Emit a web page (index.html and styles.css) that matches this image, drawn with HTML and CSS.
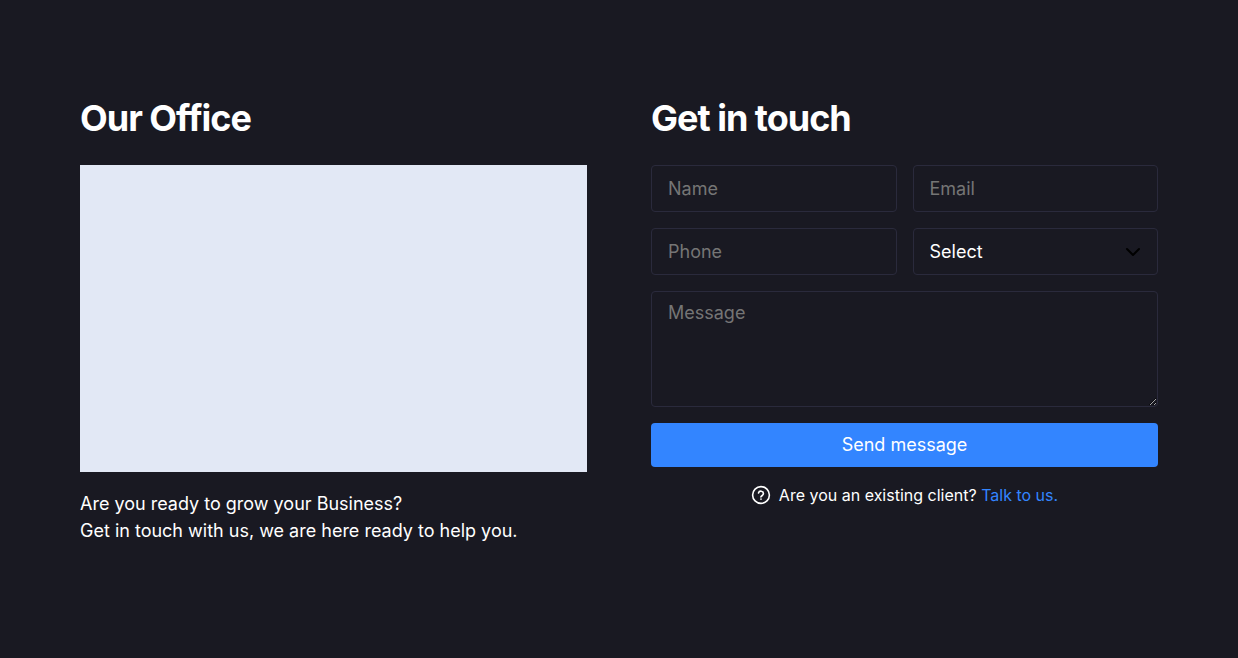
FILE: index.html
```html
<!DOCTYPE html>
<html lang="en">
<head>
<meta charset="utf-8">
<meta name="viewport" content="width=device-width, initial-scale=1">
<title>Get in touch</title>
<link rel="stylesheet" href="styles.css">
</head>
<body>
<main class="contact">
  <section class="office">
    <h2 class="title">Our Office</h2>
    <div class="map" role="img" aria-label="Office map"></div>
    <p class="intro">Are you ready to grow your Business?<br>Get in touch with us, we are here ready to help you.</p>
  </section>
  <section class="touch">
    <h2 class="title">Get in touch</h2>
    <form class="form">
      <input class="field" type="text" placeholder="Name" aria-label="Name">
      <input class="field" type="email" placeholder="Email" aria-label="Email">
      <input class="field" type="tel" placeholder="Phone" aria-label="Phone">
      <div class="select-wrap">
        <select class="field select" aria-label="Select"><option>Select</option></select>
        <svg class="chevron" viewBox="0 0 16 16" aria-hidden="true"><path d="M2 5l6 6 6-6"/></svg>
      </div>
      <textarea class="field message" placeholder="Message" aria-label="Message"></textarea>
      <button class="send" type="button">Send message</button>
    </form>
    <p class="client">
      <svg class="help" viewBox="0 0 20 20" aria-hidden="true"><circle cx="10" cy="10" r="8.4"/><path d="M7.5 8a2.5 2.5 0 0 1 4.9.8c0 1.7-2.5 2.1-2.5 3.2"/><path d="M10 14v.2"/></svg>
      <span>Are you an existing client? <a class="link" href="#">Talk to us.</a></span>
    </p>
  </section>
</main>
</body>
</html>
```
FILE: styles.css
```css
* { box-sizing: border-box; }
body {
  margin: 0;
  background: #191922;
  color: #fff;
  font: 400 18px/27px Inter, "Liberation Sans", sans-serif;
}
.contact {
  display: grid;
  grid-template-columns: 1fr 1fr;
  gap: 64px;
  padding: 96px 80px;
}
.title {
  margin: 0 0 24px;
  font-size: 36px;
  line-height: 45px;
  font-weight: 700;
  letter-spacing: -1px;
}
.map { height: 307px; background: #e2e8f5; }
.intro { margin: 18px 0 0; }
.form {
  display: grid;
  grid-template-columns: 1fr 1fr;
  gap: 16px;
}
.field {
  display: block;
  width: 100%;
  height: 47px;
  margin: 0;
  padding: 8px 16px;
  border: 1px solid #2a2a3c;
  border-radius: 4px;
  background: transparent;
  color: #fff;
  font: inherit;
}
.field::placeholder { color: #757575; opacity: 1; }
.select-wrap { position: relative; }
.select { appearance: none; }
.chevron {
  position: absolute;
  top: 16px;
  right: 17px;
  width: 16px;
  height: 16px;
  fill: none;
  stroke: #000;
  stroke-width: 2;
  stroke-linecap: round;
  stroke-linejoin: round;
  pointer-events: none;
}
.message { grid-column: 1 / -1; height: 116px; padding-top: 7px; resize: vertical; }
.send {
  grid-column: 1 / -1;
  height: 44px;
  padding: 0 16px 2px;
  border: 0;
  border-radius: 4px;
  background: #3385ff;
  color: #fff;
  font: inherit;
}
.client {
  display: flex;
  justify-content: center;
  align-items: center;
  gap: 8px;
  margin: 16px 0 0;
  font-size: 16px;
  line-height: 24px;
}
.help {
  width: 20px;
  height: 20px;
  fill: none;
  stroke: #fff;
  stroke-width: 1.6;
  stroke-linecap: round;
}
.link { color: #3385ff; text-decoration: none; }
```
